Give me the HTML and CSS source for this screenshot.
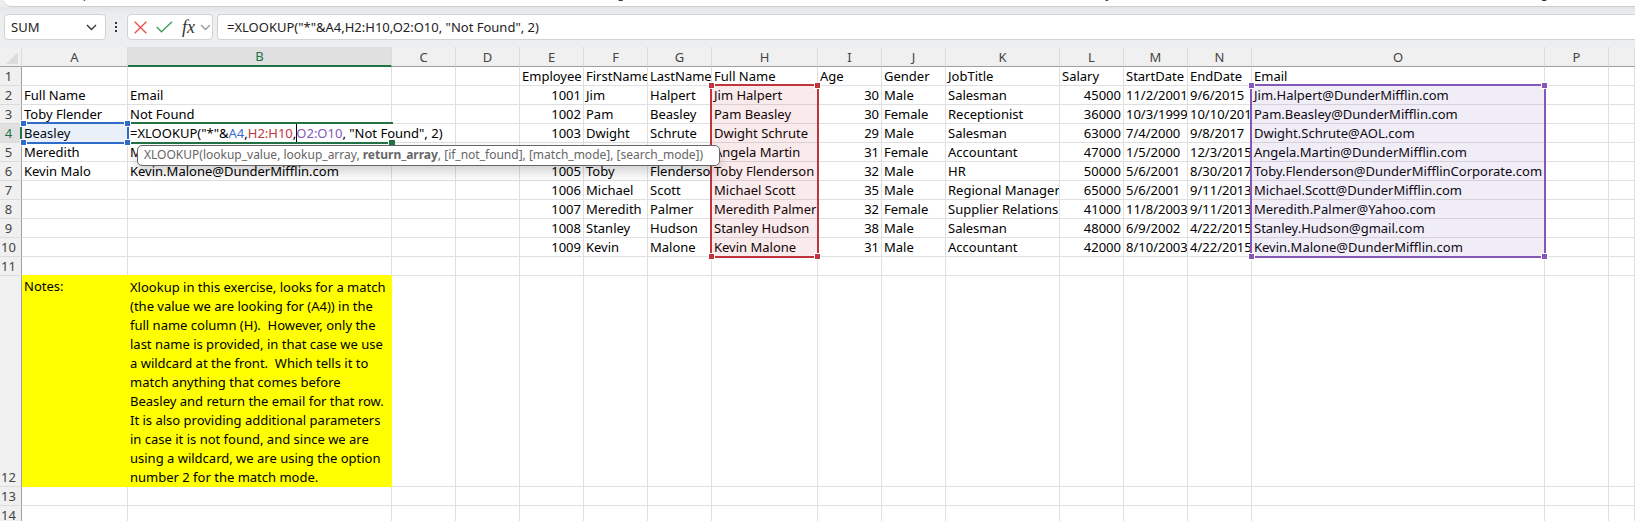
FILE: index.html
```html
<!DOCTYPE html>
<html lang="en">
<head>
<meta charset="utf-8">
<title>XLOOKUP exercise</title>
<link rel="stylesheet" href="styles.css">
</head>
<body>
<div class="app">
  <div class="ribbon">
    <span class="group">Clipboard</span><span class="group">Alignment</span><span class="group">Styles</span><span class="group">Editing</span>
  </div>
  <div class="formula-row">
    <div class="name-box">
      <input class="name-input" type="text" value="SUM" aria-label="Name box">
      <button class="icon-btn" type="button" aria-label="Show names"><svg width="11" height="7" viewBox="0 0 11 7"><path d="M1 1l4.500 4.500L10 1" fill="none" stroke="#333" stroke-width="1.400"/></svg></button>
    </div>
    <svg class="dots" width="2" height="10" viewBox="0 0 2 10"><path d="M0 0h2v2H0zM0 4h2v2H0zM0 8h2v2H0z" fill="#333"/></svg>
    <div class="actions">
      <button class="icon-btn" type="button" aria-label="Cancel"><svg width="13" height="13" viewBox="0 0 13 13"><path d="M.7.7l11.600 11.600M12.300.7L.7 12.300" stroke="#ea4a46" stroke-width="1.300"/></svg></button>
      <button class="icon-btn" type="button" aria-label="Enter"><svg width="17" height="12" viewBox="0 0 17 12"><path d="M.8 6l4.700 4.800L16 .8" fill="none" stroke="#3f9f5c" stroke-width="1.400"/></svg></button>
      <button class="icon-btn fx" type="button" aria-label="Insert function"><i>fx</i></button>
      <button class="icon-btn more" type="button" aria-label="More functions"><svg width="11" height="7" viewBox="0 0 11 7"><path d="M1 1l4.500 4.500L10 1" fill="none" stroke="#999" stroke-width="1.400"/></svg></button>
    </div>
    <input class="formula-input" type="text" aria-label="Formula bar" value="=XLOOKUP(&quot;*&quot;&amp;A4,H2:H10,O2:O10, &quot;Not Found&quot;, 2)">
  </div>
  <div class="sheet">
  <table class="grid">
    <colgroup>
      <col class="c-head"><col class="c-name"><col class="c-b"><col class="c-std"><col class="c-std"><col class="c-std"><col class="c-std"><col class="c-std"><col class="c-name"><col class="c-std"><col class="c-std"><col class="c-job"><col class="c-std"><col class="c-std"><col class="c-std"><col class="c-mail"><col class="c-std"><col>
    </colgroup>
    <thead>
      <tr><th class="corner"><svg width="12" height="12" viewBox="0 0 12 12"><path d="M12 0v12H0z" fill="#dcdcdc"/></svg></th><th>A</th><th class="active">B</th><th>C</th><th>D</th><th>E</th><th>F</th><th>G</th><th>H</th><th>I</th><th>J</th><th>K</th><th>L</th><th>M</th><th>N</th><th>O</th><th>P</th><th></th></tr>
    </thead>
    <tbody>
      <tr><th>1</th><td></td><td></td><td></td><td></td><td>Employee</td><td>FirstName</td><td>LastName</td><td>Full Name</td><td>Age</td><td>Gender</td><td>JobTitle</td><td>Salary</td><td>StartDate</td><td>EndDate</td><td>Email</td><td></td><td></td></tr>
      <tr><th>2</th><td>Full Name</td><td>Email</td><td></td><td></td><td class="num">1001</td><td>Jim</td><td>Halpert</td><td class="anchor">Jim Halpert<div class="range red"><b></b><b></b><b></b><b></b></div></td><td class="num">30</td><td>Male</td><td>Salesman</td><td class="num">45000</td><td>11/2/2001</td><td>9/6/2015</td><td class="anchor">Jim.Halpert@DunderMifflin.com<div class="range purple"><b></b><b></b><b></b><b></b></div></td><td></td><td></td></tr>
      <tr><th>3</th><td>Toby Flender</td><td>Not Found</td><td></td><td></td><td class="num">1002</td><td>Pam</td><td>Beasley</td><td>Pam Beasley</td><td class="num">30</td><td>Female</td><td>Receptionist</td><td class="num">36000</td><td>10/3/1999</td><td>10/10/2015</td><td>Pam.Beasley@DunderMifflin.com</td><td></td><td></td></tr>
      <tr><th class="active">4</th><td class="anchor">Beasley<div class="range blue"><b></b><b></b><b></b><b></b></div></td><td class="anchor editing"><div class="editor">=XLOOKUP("*"&amp;<span class="ref-a">A4</span>,<span class="ref-h">H2:H10</span>,<span class="caret"></span><span class="ref-o">O2:O10</span>, "Not Found", 2)</div><div class="frame"></div><div class="hint" role="tooltip">XLOOKUP(lookup_value, lookup_array, <strong>return_array</strong>, [if_not_found], [match_mode], [search_mode])</div></td><td></td><td></td><td class="num">1003</td><td>Dwight</td><td>Schrute</td><td>Dwight Schrute</td><td class="num">29</td><td>Male</td><td>Salesman</td><td class="num">63000</td><td>7/4/2000</td><td>9/8/2017</td><td>Dwight.Schrute@AOL.com</td><td></td><td></td></tr>
      <tr><th>5</th><td>Meredith</td><td>Meredith.Palmer@Yahoo.com</td><td></td><td></td><td></td><td></td><td></td><td>Angela Martin</td><td class="num">31</td><td>Female</td><td>Accountant</td><td class="num">47000</td><td>1/5/2000</td><td>12/3/2015</td><td>Angela.Martin@DunderMifflin.com</td><td></td><td></td></tr>
      <tr><th>6</th><td>Kevin Malo</td><td>Kevin.Malone@DunderMifflin.com</td><td></td><td></td><td class="num">1005</td><td>Toby</td><td>Flenderson</td><td>Toby Flenderson</td><td class="num">32</td><td>Male</td><td>HR</td><td class="num">50000</td><td>5/6/2001</td><td>8/30/2017</td><td class="spill">Toby.Flenderson@DunderMifflinCorporate.com</td><td></td><td></td></tr>
      <tr><th>7</th><td></td><td></td><td></td><td></td><td class="num">1006</td><td>Michael</td><td>Scott</td><td>Michael Scott</td><td class="num">35</td><td>Male</td><td>Regional Manager</td><td class="num">65000</td><td>5/6/2001</td><td>9/11/2013</td><td>Michael.Scott@DunderMifflin.com</td><td></td><td></td></tr>
      <tr><th>8</th><td></td><td></td><td></td><td></td><td class="num">1007</td><td>Meredith</td><td>Palmer</td><td>Meredith Palmer</td><td class="num">32</td><td>Female</td><td>Supplier Relations</td><td class="num">41000</td><td>11/8/2003</td><td>9/11/2013</td><td>Meredith.Palmer@Yahoo.com</td><td></td><td></td></tr>
      <tr><th>9</th><td></td><td></td><td></td><td></td><td class="num">1008</td><td>Stanley</td><td>Hudson</td><td>Stanley Hudson</td><td class="num">38</td><td>Male</td><td>Salesman</td><td class="num">48000</td><td>6/9/2002</td><td>4/22/2015</td><td>Stanley.Hudson@gmail.com</td><td></td><td></td></tr>
      <tr><th>10</th><td></td><td></td><td></td><td></td><td class="num">1009</td><td>Kevin</td><td>Malone</td><td>Kevin Malone</td><td class="num">31</td><td>Male</td><td>Accountant</td><td class="num">42000</td><td>8/10/2003</td><td>4/22/2015</td><td>Kevin.Malone@DunderMifflin.com</td><td></td><td></td></tr>
      <tr class="before-notes"><th>11</th><td></td><td></td><td></td><td></td><td></td><td></td><td></td><td></td><td></td><td></td><td></td><td></td><td></td><td></td><td></td><td></td><td></td></tr>
      <tr class="notes"><th>12</th><td class="note">Notes:</td><td class="note long">Xlookup in this exercise, looks for a match<br>(the value we are looking for (A4)) in the<br>full name column (H).&nbsp; However, only the<br>last name is provided, in that case we use<br>a wildcard at the front.&nbsp; Which tells it to<br>match anything that comes before<br>Beasley and return the email for that row.<br>It is also providing additional parameters<br>in case it is not found, and since we are<br>using a wildcard, we are using the option<br>number 2 for the match mode.</td><td></td><td></td><td></td><td></td><td></td><td></td><td></td><td></td><td></td><td></td><td></td><td></td><td></td><td></td><td></td></tr>
      <tr><th>13</th><td></td><td></td><td></td><td></td><td></td><td></td><td></td><td></td><td></td><td></td><td></td><td></td><td></td><td></td><td></td><td></td><td></td></tr>
      <tr><th>14</th><td></td><td></td><td></td><td></td><td></td><td></td><td></td><td></td><td></td><td></td><td></td><td></td><td></td><td></td><td></td><td></td><td></td></tr>
    </tbody>
  </table>
  </div>
</div>
</body>
</html>
```
FILE: styles.css
```css
* { box-sizing: border-box; }

body {
  margin: 0;
  background: #eceef0;
  color: #000;
  font-family: "Noto Sans", "Open Sans", sans-serif;
  font-size: 13px;
}

.app {
  display: flex;
  flex-direction: column;
  height: 100vh;
  overflow: hidden;
}

/* Bottom edge of the ribbon with its group labels */
.ribbon {
  display: grid;
  grid-template-columns: 533fr 490fr 413fr 126fr;
  align-content: end;
  flex: none;
  height: 7px;
  margin-left: 4px;
  padding: 0 0 5px 65px;
  overflow: hidden;
  background: #fff;
  border-bottom: 1px solid #cdd0d2;
  border-bottom-left-radius: 8px;
}

.group {
  color: #333;
  font-size: 12px;
  line-height: 14px;
}

.formula-row {
  display: flex;
  align-items: center;
  flex: none;
  height: 40px;
  padding-left: 4px;
  background: linear-gradient(#e2e4e6, #eceef0 8px);
}

.name-box,
.actions,
.formula-input {
  height: 26px;
  background: #fff;
  border: 1px solid #d0d2d4;
  border-radius: 4px;
}

.name-box {
  display: flex;
  align-items: center;
  width: 102px;
  padding: 0 8px 0 6px;
}

.name-input {
  flex: 1;
  min-width: 0;
  padding: 0;
  border: 0;
  outline: 0;
  background: none;
  color: #222;
  font: inherit;
}

.icon-btn {
  display: flex;
  align-items: center;
  padding: 0;
  border: 0;
  background: none;
}

.dots { margin: 0 10px 0 9px; }

.actions {
  display: flex;
  align-items: center;
  gap: 9px;
  width: 86px;
  padding: 0 2px 0 6px;
}

.fx {
  color: #333;
  font-family: "Liberation Serif", serif;
  font-size: 18px;
  line-height: 20px;
}

.more { margin-left: auto; }

.actions .fx + .more { margin-left: -4px; }

.formula-input {
  flex: 1;
  min-width: 0;
  margin-left: 4px;
  padding: 0 9px;
  border-right: 0;
  border-top-right-radius: 0;
  border-bottom-right-radius: 0;
  outline: 0;
  color: #222;
  font: inherit;
}

.sheet {
  flex: 1;
  min-height: 0;
  overflow: hidden;
  background: #fff;
}

.grid {
  width: 100%;
  table-layout: fixed;
  border-spacing: 0;
  line-height: 18px;
}

.c-head { width: 22px; }
.c-name { width: 106px; }
.c-b { width: 264px; }
.c-std { width: 64px; }
.c-job { width: 114px; }
.c-mail { width: 293px; }

td {
  height: 19px;
  padding: 0 2px;
  overflow: hidden;
  border-right: 1px solid #e0e0e0;
  border-bottom: 1px solid #e0e0e0;
  white-space: nowrap;
}

th {
  padding: 0;
  background: #f0f0f0;
  color: #444;
  font-weight: 400;
  text-align: center;
}

thead th {
  height: 20px;
  border-right: 1px solid #dcdcdc;
  border-bottom: 1px solid #a0a0a0;
}

thead .active {
  background: #e0e0e0;
  border-bottom: 2px solid #217346;
  color: #217346;
  line-height: 17px;
}

.corner { vertical-align: bottom; }

.corner svg {
  display: block;
  margin: 0 3px 2px auto;
}

tbody th {
  padding-right: 4px;
  border-right: 1px solid #a0a0a0;
  border-bottom: 1px solid #dcdcdc;
}

tbody .active {
  background: #e0e0e0;
  border-right: 2px solid #217346;
  color: #217346;
  padding-right: 3px;
}

.num { text-align: right; }

.spill { overflow: visible; }

.anchor {
  position: relative;
  overflow: visible;
}

/* Coloured outline over a referenced range */
.range {
  --rows: 9;
  position: absolute;
  z-index: 1;
  top: -2px;
  left: -2px;
  right: -2px;
  height: calc(var(--rows) * 19px + 3px);
  border: 2px solid;
}

.range b {
  position: absolute;
  width: 7px;
  height: 7px;
  border: 1px solid #fff;
  background: currentColor;
}

.range b:nth-child(1) { top: -4px; left: -4px; }
.range b:nth-child(2) { top: -4px; right: -4px; }
.range b:nth-child(3) { bottom: -4px; left: -4px; }
.range b:nth-child(4) { bottom: -4px; right: -4px; }

.red { color: #c0343c; background: rgba(192, 52, 60, .1); }
.purple { color: #8458b8; background: rgba(132, 88, 184, .11); }
.blue {
  --rows: 1;
  z-index: 3;
  left: 0;
  color: #2f6bc9;
  background: rgba(47, 107, 201, .1);
  border-left-width: 0;
}

.blue b:nth-child(odd) { left: -2px; }

.editing { padding: 0; }

.editor {
  position: relative;
  z-index: 2;
  width: max-content;
  padding: 0 4px 0 2px;
  background: #fff;
}

.frame {
  position: absolute;
  z-index: 2;
  inset: -2px -2px -2px -1px;
  border: solid #217346;
  border-width: 2px 0 2px 2px;
}

.frame::after {
  content: "";
  position: absolute;
  right: -2px;
  bottom: -3px;
  width: 6px;
  height: 5px;
  background: #217346;
  border: solid #fff;
  border-width: 1px 0 0 1px;
}

.ref-a { color: #3a6fcf; }
.ref-h { color: #c0343c; }
.ref-o { color: #8458b8; }

.caret {
  display: inline-block;
  width: 1px;
  height: 18px;
  margin-right: -1px;
  background: #000;
  vertical-align: top;
}

.hint {
  position: absolute;
  z-index: 5;
  top: 21px;
  left: 9px;
  padding: 0 16px 0 6px;
  border: 1px solid #666;
  border-radius: 5px;
  background: #fff;
  box-shadow: 0 6px 12px rgba(0, 0, 0, .18);
  color: #666;
  font-size: 12px;
  line-height: 18px;
  padding-bottom: 1px;
}

.before-notes td:nth-child(-n+3) { border-bottom-color: #ff0; }

.notes td,
.notes th { line-height: 19px; }

.notes th {
  vertical-align: bottom;
  line-height: 18px;
}

.notes .note {
  padding-top: 1px;
  background: #ff0;
  border-color: #ff0;
  vertical-align: top;
}

.notes .long {
  padding-top: 2px;
  border-bottom: 0;
}
```
